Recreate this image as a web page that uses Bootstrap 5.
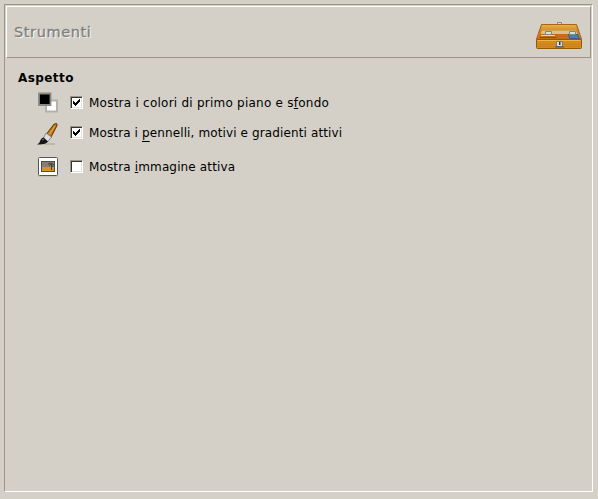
<!DOCTYPE html>
<html lang="it">
<head>
<meta charset="utf-8">
<meta name="viewport" content="width=device-width, initial-scale=1">
<title>Strumenti</title>
<link href="https://cdn.jsdelivr.net/npm/bootstrap@5.3.0/dist/css/bootstrap.min.css" rel="stylesheet">
<style>
body{background:#d4d0c8;font-family:"DejaVu Sans",sans-serif;font-size:12px;color:#000;line-height:16px}
.sunken{margin:4px 5px 0 4px;height:488px;border:1px solid #9c9585;border-right-color:#fff;border-bottom-color:#fff;padding:1px}
.titlebar{height:52px;border:1px solid #fff;border-right-color:#9c9585;border-bottom-color:#9c9585;padding:0 7px}
.titlebar h1{font-size:14.5px;line-height:18px;color:#7f817e;letter-spacing:.6px;text-shadow:1px 1px 0 #fff;-webkit-text-stroke:.3px #7f817e}
.titlebar svg{margin-top:6px}
.section-name{font-size:12px;font-weight:700;line-height:16px;letter-spacing:.42px;margin:12px 0 0 12px}
.options{display:grid;grid-template-rows:33px 27px 41px;padding-left:31px}
.option svg{flex:none}
.option .form-check-input{width:13px;height:13px;margin:0 6px 0 11px;border-radius:0;border:1px solid #9c9585;border-right-color:#fff;border-bottom-color:#fff;background-color:#fff;box-shadow:inset 1px 1px 0 #333,inset -1px -1px 0 #e4e1db;flex:none}
.option .form-check-input:checked{background-image:url("data:image/svg+xml,%3Csvg xmlns='http://www.w3.org/2000/svg' viewBox='0 0 11 11' shape-rendering='crispEdges'%3E%3Cpath d='M2 4h1v1h1v1h1v-1h1v-1h1v-1h1v-1h1v3h-1v1h-1v1h-1v1h-1v1h-1v-1h-1v-1h-1z'/%3E%3C/svg%3E");background-size:100% 100%}
.option u{text-decoration:underline 1px;text-underline-offset:1px;text-decoration-skip-ink:none}
.option .low{text-underline-offset:4px}
.label-colors{letter-spacing:.24px}
.label-brushes{letter-spacing:.12px}
.label-image{letter-spacing:.14px}
.brush{margin-top:3px}
</style>
<script src="https://cdn.jsdelivr.net/npm/bootstrap@5.3.0/dist/js/bootstrap.bundle.min.js"></script>
</head>
<body>
<main class="sunken">
<header class="titlebar d-flex align-items-center justify-content-between">
<h1 class="m-0 fw-normal">Strumenti</h1>
<svg width="48" height="30" viewBox="-1 0 48 30" aria-hidden="true">
<defs><linearGradient id="lid" x2="0" y2="1"><stop stop-color="#e8ae50"/><stop offset="1" stop-color="#d58d24"/></linearGradient></defs>
<path d="M21.500 4.500v-2h4v2" fill="#ddd" stroke="#8b8b85"/>
<path d="M5.500 4.500h35l5 14.500h-45z" fill="#c98422" stroke="#a8660e"/>
<path d="M6 5h34l1.500 5.500h-37z" fill="url(#lid)"/>
<path d="M6 10.500h34l2 5H4z" fill="#d3c391"/>
<path d="M4 14h38l2 5H2z" fill="#b5701a"/>
<path d="M5 15.500h14" stroke="#e6d7b0"/><path d="M4 17.500h16" stroke="#6a5a48"/><path d="M21 14h9l1 4H20z" fill="#c9661c"/>
<path d="M22 15.500h10M23 17.500h10" stroke="#8d8272"/>
<path d="M32.500 14.500h9l2 4h-10z" fill="#4c7db8" stroke="#2f5f96"/>
<path d="M.5 19.500h45v8q0 1-1 1h-43q-1 0-1-1z" fill="#d58a1c" stroke="#945807"/>
<path d="M1.500 20.500h43" stroke="#efb34b"/><path d="M2 24.500h42M2 26.500h42" stroke="#c88020"/>
<path d="M9.500 11.500h6v3h-6zM33.500 11.500h6v3h-6z" fill="#ddd" stroke="#858580"/>
<path d="M20.500 21.500h6v5h-6z" fill="#ddd" stroke="#777"/><path d="M19 27h9" stroke="#555"/><path d="M23 22h1.500v3H23z" fill="#333"/>
</svg>
</header>
<h2 class="section-name">Aspetto</h2>
<div class="options">
<label class="option d-flex align-items-center">
<svg width="22" height="22" viewBox="-1 -.5 22 22" aria-hidden="true"><path d="M8 8h11v11H8z" fill="#fff" stroke="#b5b2ab" stroke-width="2"/><path d="M1 1h11.500v11.500H1z" fill="#000" stroke="#8a8883" stroke-width="1.800"/></svg>
<input class="form-check-input" type="checkbox" checked><span class="label-colors">Mostra i colori di primo piano e s<u>f</u>ondo</span></label>
<label class="option d-flex align-items-center">
<svg class="brush" width="22" height="24" viewBox="0 0 22 24" aria-hidden="true"><path d="M7 22h11" stroke="#bbb7ae" stroke-width="2"/><path d="M9.500 12L17 2.500q3-2 3 .8L14 15z" fill="#c97d20" stroke="#784309" stroke-width="1.200"/><path d="M12.500 12l5.500-8" stroke="#e8a94b"/><path d="M9 11l5.500 4-4 5-4-4z" fill="#ddd" stroke="#777" stroke-width=".8"/><path d="M6.500 15.500L11 19.500Q9 23 0 22.500 3 21 3.500 18 5 15 6.500 15.500z" fill="#151515"/><path d="M5 18l2-1" stroke="#777"/></svg>
<input class="form-check-input" type="checkbox" checked><span class="label-brushes">Mostra i <u class="low">p</u>ennelli, motivi e gradienti attivi</span></label>
<label class="option d-flex align-items-center">
<svg width="22" height="21" viewBox="-1 0 22 21" aria-hidden="true"><path d="M0 20h20" stroke="#b3afa7"/><rect x=".5" y="1.500" width="19" height="18" rx="1" fill="#fff" stroke="#555753"/><path d="M3 5h14v11H3z" fill="#4f4e49"/><path d="M4 6h12v5H4z" fill="#827f77"/><path d="M4 11h12v4H4z" fill="#dc9420"/><path d="M13.500 8v6M10 8l3-1 3 2M11 10l2-2 2 3" stroke="#45433d" fill="none"/></svg>
<input class="form-check-input" type="checkbox"><span class="label-image">Mostra <u>i</u>mmagine attiva</span></label>
</div>
</main>
</body>
</html>
